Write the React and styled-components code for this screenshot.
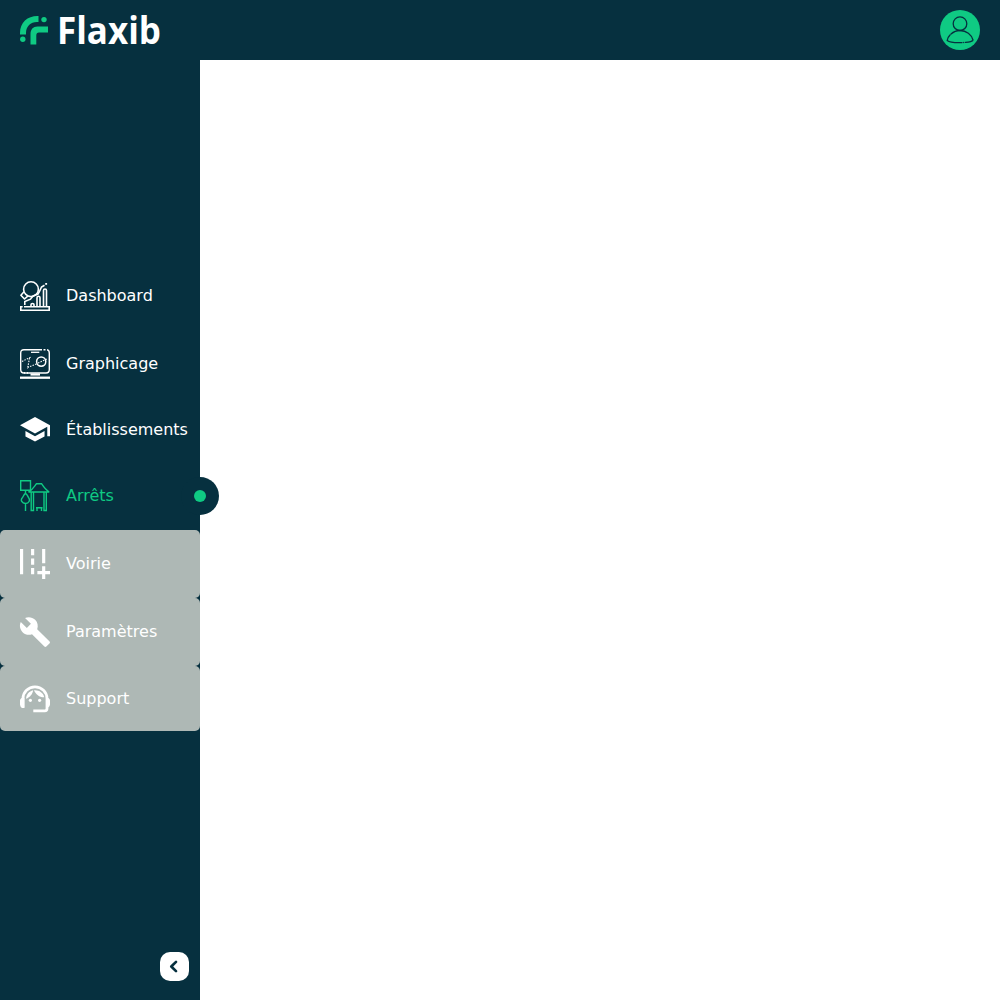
import React from "react";
import styled, { createGlobalStyle } from "styled-components";
import { MdSchool, MdAddRoad, MdBuild } from "react-icons/md";

const NAVY = "#06303f";
const GREEN = "#0fca83";

const GlobalStyle = createGlobalStyle`
  * { box-sizing: border-box; }
  body { margin: 0; background: #fff; font-family: "DejaVu Sans", sans-serif; }
`;

const Page = styled.div`
  height: 100vh;
  display: flex;
  flex-direction: column;
  overflow: hidden;
`;

const Header = styled.header`
  height: 60px;
  flex: none;
  display: flex;
  align-items: center;
  justify-content: space-between;
  padding: 0 20px;
  background: ${NAVY};
`;

const Logo = styled.svg`
  width: 160px;
  height: 60px;
  display: block;
  overflow: visible;
`;

const Avatar = styled.button`
  width: 40px;
  height: 40px;
  padding: 0;
  border: 0;
  border-radius: 50%;
  background: ${GREEN};
  svg { display: block; }
`;

const Body = styled.div`
  flex: 1;
  display: flex;
  min-height: 0;
`;

const Sidebar = styled.aside`
  width: 200px;
  display: flex;
  flex-direction: column;
  padding-top: 202px;
  background: ${NAVY};
`;

const Nav = styled.nav`
  flex: 1;
`;

const NavItem = styled.a`
  position: relative;
  height: ${(p) => p.$height}px;
  display: flex;
  align-items: center;
  gap: 16px;
  padding: 0 0 0 20px;
  border-radius: 5px;
  color: ${(p) => (p.$active ? GREEN : "#fff")};
  background: ${(p) => (p.$disabled ? "#aeb8b5" : "transparent")};
  font-size: 16px;
  line-height: 19px;
  white-space: nowrap;
  > svg { width: 30px; height: 30px; flex: none; overflow: visible; }
`;

const NavLabel = styled.span`
  padding-bottom: ${(p) => (p.$raised ? 2 : 0)}px;
`;

const ActiveMarker = styled.span`
  position: absolute;
  top: 15px;
  right: -19px;
  width: 38px;
  height: 38px;
  border-radius: 50%;
  background: ${NAVY};
  display: grid;
  place-items: center;
  &::after {
    content: "";
    width: 12px;
    height: 12px;
    border-radius: 50%;
    background: ${GREEN};
  }
`;

const SidebarFooter = styled.div`
  display: flex;
  justify-content: flex-end;
  padding: 0 11px 19px;
`;

const CollapseButton = styled.button`
  width: 29px;
  height: 29px;
  display: grid;
  place-items: center;
  padding: 0;
  border: 0;
  border-radius: 10px;
  background: #fff;
  color: ${NAVY};
  svg { display: block; }
`;

const Main = styled.main`
  flex: 1;
`;

const BrandLogo = () => (
  <Logo viewBox="0 0 160 60" aria-label="Flaxib">
    <g fill={GREEN} transform="translate(0 10)">
      <path d="M0 24.500V23C0 12.500 7.500 6 17.500 6H18.500V12H17C10.500 12 6 16.500 6 23V24.500Z" />
      <path d="M10.500 34.500V24C10.500 19.500 13 16.500 17.500 16.500H28V22.500H19C17.200 22.500 16.300 23.500 16.300 25.500V34.500Z" />
      <circle cx="24" cy="9.600" r="2.700" />
      <circle cx="2.800" cy="29.300" r="2.700" />
    </g>
    <text x="37" y="44" fill="#fff" fontFamily='"Open Sans", sans-serif' fontWeight="700" fontSize="38" textLength="104" lengthAdjust="spacingAndGlyphs">Flaxib</text>
  </Logo>
);

const UserIcon = () => (
  <svg width="40" height="40" viewBox="0 0 40 40" fill="none" stroke={NAVY} strokeWidth="1.300" strokeLinecap="round">
    <circle cx="20" cy="13.700" r="6.800" />
    <path d="M11 24C13.500 21.800 16.800 20.500 20 20.500C26.500 20.500 31.500 24.500 33 30C33.200 31.200 29 32.200 25.500 32.400M22 32.600C16 32.800 9 32 7.200 30.500C7.300 28.500 8.500 26.500 10 25" />
    <path d="M23.700 32.500h.01" />
  </svg>
);

const ChevronIcon = () => (
  <svg width="29" height="29" viewBox="0 0 29 29" fill="none" stroke="currentColor" strokeWidth="2.700" strokeLinecap="round" strokeLinejoin="round">
    <path d="M16 9.900L11.300 14.500L16 19.100" />
  </svg>
);

const DashboardIcon = () => (
  <svg viewBox="0 0 30 30" fill="none" stroke="currentColor" strokeWidth="1.600">
    <circle cx="11" cy="8.200" r="7.400" />
    <path d="M4 10.800L.9 14.200L4.500 18L8 14.800" strokeLinejoin="round" />
    <path d="M4.800 24V20.500L10.500 18.200L13.200 14.800L18 13L19.500 10.500L21.500 6L24.500 4.200" />
    <path d="M25.200 2.900h1.900" strokeWidth="1.800" />
    <path d="M2.700 25.700H.8V29.200H29.200V25.700H4" />
    <path d="M11 25.500V23.800Q11 22.500 12.500 22.500T14 23.800V25.500M17 25.500V16.800Q17 15.200 18.500 15.200T20 16.800V25.500M23.500 25.500V9.500Q23.500 8 25 8T26.500 9.500V25.500" />
  </svg>
);

const GraphIcon = () => (
  <svg viewBox="0 0 30 30" fill="none" stroke="currentColor">
    <path d="M22 .7H4Q.7.7.7 4V20.500Q.7 24 4 24H26Q29.300 24 29.300 20.500V4Q29.300 1 27 .7M23.500.7H25.500" strokeWidth="1.400" />
    <path d="M11 3.300H19.300" strokeWidth="1.300" />
    <path d="M0 28.700H30" strokeWidth="2.300" />
    <path d="M10.500 25.500H20" strokeWidth="2.200" />
    <circle cx="21.200" cy="12.600" r="4.600" strokeWidth="1.500" />
    <path d="M2 12.500L11 8M9.500 9L7.500 20M7.500 18.500L17 14.800M18 14L27 10" strokeWidth="1.100" strokeDasharray="1.500 1.200" />
    <path d="M4 23.900h1M7 23.900h1" strokeWidth="1.800" />
  </svg>
);

const SchoolIcon = () => <MdSchool viewBox="1 1.500 22 22" />;
const RoadIcon = () => <MdAddRoad viewBox="4 4 19 19" />;
const WrenchIcon = () => <MdBuild viewBox="1 1 22 22" />;

const BusStopIcon = () => (
  <svg viewBox="0 1 30 30" fill="none" stroke="currentColor" strokeWidth="1.400">
    <path d="M.7.700H10.500V10.200H.7Z" />
    <path d="M5.500 10.500V13M5.500 13.500C3.500 14.500 3.800 16 2.500 17.500C0 20 2 23.500 5.500 23.500S10.500 20 8.500 17.500C7.500 16 7.500 14.500 5.500 13.500ZM5.500 23V31" />
    <path d="M8.500 12H29.200C25.500 10 23 6 21.500 3.700H16.500C14.500 6 12.500 10 8.500 12Z" />
    <path d="M11.200 12V30.500H13.500V12M24 12V30.500H26.300V12" />
    <path d="M16 27.700H22.500M17 27.700V31M21.500 27.700V31" />
  </svg>
);

const SupportIcon = () => (
  <svg viewBox="0 0 30 30" fill="currentColor">
    <path d="M3 23.500V14.500A12 11.600 0 0 1 27 14.500V24.500Q27 26.900 24.800 26.900H13.300" fill="none" stroke="currentColor" strokeWidth="2.800" />
    <path d="M1.700 14Q0 14.500 0 16.500V20.500Q0 22.500 2 24H4.400V14ZM28.300 14Q30 14.500 30 16.500V20.500Q30 22.500 28 23.500H26V14Z" />
    <path d="M6 14.800C6.300 10.500 9 7.300 13.200 6.300C12.700 9.800 10 13.500 6 14.800Z" />
    <path d="M14 6.200C19 5.800 23.300 8.600 24.200 13.200C19.500 13.400 15.800 10.500 14 6.200Z" />
    <circle cx="10.400" cy="16.300" r="1.600" />
    <circle cx="19.600" cy="16.300" r="1.600" />
  </svg>
);

const items = [
  { label: "Dashboard", icon: DashboardIcon, height: 68, raised: true },
  { label: "Graphicage", icon: GraphIcon, height: 68, raised: true },
  { label: "Établissements", icon: SchoolIcon, height: 64, raised: true },
  { label: "Arrêts", icon: BusStopIcon, height: 68, raised: true, active: true },
  { label: "Voirie", icon: RoadIcon, height: 68, raised: true, disabled: true },
  { label: "Paramètres", icon: WrenchIcon, height: 68, raised: true, disabled: true },
  { label: "Support", icon: SupportIcon, height: 65, disabled: true },
];

export default function App() {
  return (
    <Page>
      <GlobalStyle />
      <Header>
        <BrandLogo />
        <Avatar aria-label="Profil"><UserIcon /></Avatar>
      </Header>
      <Body>
        <Sidebar>
          <Nav>
            {items.map(({ label, icon: Icon, height, raised, active, disabled }) => (
              <NavItem key={label} $height={height} $active={active} $disabled={disabled}>
                <Icon />
                <NavLabel $raised={raised}>{label}</NavLabel>
                {active && <ActiveMarker />}
              </NavItem>
            ))}
          </Nav>
          <SidebarFooter>
            <CollapseButton aria-label="Réduire"><ChevronIcon /></CollapseButton>
          </SidebarFooter>
        </Sidebar>
        <Main />
      </Body>
    </Page>
  );
}
